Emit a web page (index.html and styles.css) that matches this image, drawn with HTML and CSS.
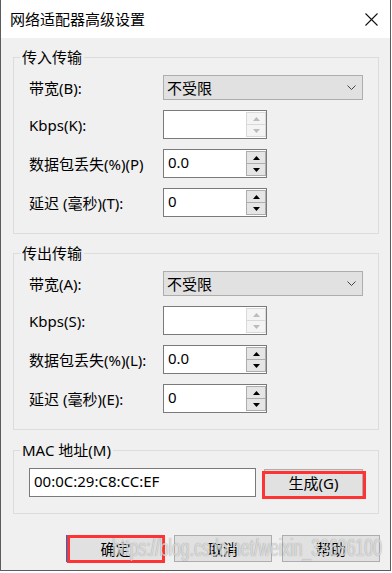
FILE: index.html
```html
<!doctype html>
<html lang="zh-CN">
  <head>
    <meta charset="UTF-8" />
    <meta name="viewport" content="width=device-width, initial-scale=1.0" />
    <title>网络适配器高级设置</title>
    <link rel="stylesheet" href="styles.css">
  </head>
  <body>
    <div class="window">
      <div class="titlebar">
        <span class="title">网络适配器高级设置</span>
        <svg class="close" width="13" height="13" viewBox="0 0 13 13" fill="none" stroke="#111" stroke-width="1.1">
          <path d="M0.5 0.5l12 12M12.5 0.5l-12 12" />
        </svg>
      </div>

      <div class="content">
        <fieldset class="group">
          <legend>传入传输</legend>
          <div class="row row-select">
            <span class="label">带宽(B):</span>
            <div class="select">
              <span>不受限</span>
              <svg class="chevron" width="9" height="5" viewBox="0 0 9 5" fill="none" stroke="#444" stroke-width="1">
                <path d="M0.5 0.5l4 4 4-4" />
              </svg>
            </div>
          </div>
          <div class="row">
            <span class="label">Kbps(K):</span>
            <div class="spin is-disabled">
              <span class="spin-value"></span>
              <span class="spin-buttons">
                <span class="spin-btn"><svg width="7" height="4" viewBox="0 0 7 4"><path d="M0 4h7L3.5 0z" /></svg></span>
                <span class="spin-btn"><svg width="7" height="4" viewBox="0 0 7 4"><path d="M0 0h7L3.5 4z" /></svg></span>
              </span>
            </div>
          </div>
          <div class="row">
            <span class="label">数据包丢失(%)(P)</span>
            <div class="spin">
              <span class="spin-value">0.0</span>
              <span class="spin-buttons">
                <span class="spin-btn"><svg width="7" height="4" viewBox="0 0 7 4"><path d="M0 4h7L3.5 0z" /></svg></span>
                <span class="spin-btn"><svg width="7" height="4" viewBox="0 0 7 4"><path d="M0 0h7L3.5 4z" /></svg></span>
              </span>
            </div>
          </div>
          <div class="row">
            <span class="label">延迟 (毫秒)(T):</span>
            <div class="spin">
              <span class="spin-value">0</span>
              <span class="spin-buttons">
                <span class="spin-btn"><svg width="7" height="4" viewBox="0 0 7 4"><path d="M0 4h7L3.5 0z" /></svg></span>
                <span class="spin-btn"><svg width="7" height="4" viewBox="0 0 7 4"><path d="M0 0h7L3.5 4z" /></svg></span>
              </span>
            </div>
          </div>
        </fieldset>

        <fieldset class="group">
          <legend>传出传输</legend>
          <div class="row row-select">
            <span class="label">带宽(A):</span>
            <div class="select">
              <span>不受限</span>
              <svg class="chevron" width="9" height="5" viewBox="0 0 9 5" fill="none" stroke="#444" stroke-width="1">
                <path d="M0.5 0.5l4 4 4-4" />
              </svg>
            </div>
          </div>
          <div class="row">
            <span class="label">Kbps(S):</span>
            <div class="spin is-disabled">
              <span class="spin-value"></span>
              <span class="spin-buttons">
                <span class="spin-btn"><svg width="7" height="4" viewBox="0 0 7 4"><path d="M0 4h7L3.5 0z" /></svg></span>
                <span class="spin-btn"><svg width="7" height="4" viewBox="0 0 7 4"><path d="M0 0h7L3.5 4z" /></svg></span>
              </span>
            </div>
          </div>
          <div class="row">
            <span class="label">数据包丢失(%)(L):</span>
            <div class="spin">
              <span class="spin-value">0.0</span>
              <span class="spin-buttons">
                <span class="spin-btn"><svg width="7" height="4" viewBox="0 0 7 4"><path d="M0 4h7L3.5 0z" /></svg></span>
                <span class="spin-btn"><svg width="7" height="4" viewBox="0 0 7 4"><path d="M0 0h7L3.5 4z" /></svg></span>
              </span>
            </div>
          </div>
          <div class="row">
            <span class="label">延迟 (毫秒)(E):</span>
            <div class="spin">
              <span class="spin-value">0</span>
              <span class="spin-buttons">
                <span class="spin-btn"><svg width="7" height="4" viewBox="0 0 7 4"><path d="M0 4h7L3.5 0z" /></svg></span>
                <span class="spin-btn"><svg width="7" height="4" viewBox="0 0 7 4"><path d="M0 0h7L3.5 4z" /></svg></span>
              </span>
            </div>
          </div>
        </fieldset>

        <fieldset class="group group-mac">
          <legend>MAC 地址(M)</legend>
          <div class="mac-row">
            <div class="mac-input">00:0C:29:C8:CC:EF</div>
            <button class="btn btn-generate marked">生成(G)</button>
          </div>
        </fieldset>

        <div class="actions">
          <button class="btn btn-default marked">确定</button>
          <button class="btn">取消</button>
          <button class="btn">帮助</button>
        </div>
      </div>

      <div class="watermark">https://blog.csdn.net/weixin_38686100</div>
    </div>
  </body>
</html>
```

FILE: styles.css
```css
body {
  margin: 0;
  background: #fff;
  font-family: "Noto Sans", "Noto Sans CJK SC", sans-serif;
  font-size: 15px;
  color: #000;
}

.window {
  position: relative;
  width: 391px;
  height: 571px;
  box-sizing: border-box;
  border: 1px solid #5c5c5c;
  border-top: 0;
  background: #f0f0f0;
  overflow: hidden;
}

.titlebar {
  height: 38px;
  background: #fff;
  display: flex;
  align-items: center;
  justify-content: space-between;
  padding: 0 12px 0 9px;
}

.title {
  line-height: 20px;
}

.content {
  padding: 0 11px 0 12px;
}

.group {
  margin: 9px 0 0;
  padding: 8px 0 16px 15px;
  border: 1px solid #dcdcdc;
  min-width: 0;
}

.group legend {
  margin-left: -9px;
  padding: 0 2px;
  line-height: 20px;
}

.row {
  display: flex;
  align-items: center;
  height: 29px;
  margin-top: 10px;
}

.row-select {
  height: 25px;
  margin-top: 0;
}

.label {
  width: 134px;
  flex: none;
  white-space: nowrap;
}

.select {
  width: 200px;
  height: 25px;
  box-sizing: border-box;
  border: 1px solid #adadad;
  background: #e1e1e1;
  display: flex;
  align-items: center;
  justify-content: space-between;
  padding: 0 6px 0 3px;
}

.spin {
  width: 104px;
  height: 29px;
  box-sizing: border-box;
  border: 1px solid #7a7a7a;
  background: #fff;
  display: flex;
}

.spin-value {
  flex: 1;
  padding: 2px 0 0 4px;
  line-height: 20px;
}

.spin-buttons {
  width: 20px;
  display: flex;
  flex-direction: column;
  padding: 1px 0;
}

.spin-btn {
  flex: 1;
  display: flex;
  align-items: center;
  justify-content: center;
  border: 1px solid #adadad;
  background: #e5e5e5;
  fill: #000;
}

.spin-btn + .spin-btn {
  border-top: 0;
}

.is-disabled .spin-btn {
  border-color: #d9d9d9;
  background: #f4f4f4;
  fill: #bcbcbc;
}

.group-mac {
  margin-top: 10px;
}

.mac-row {
  display: flex;
  align-items: center;
  gap: 8px;
  padding-right: 0;
}

.mac-input {
  width: 227px;
  height: 29px;
  box-sizing: border-box;
  border: 1px solid #7a7a7a;
  background: #fff;
  padding: 2px 0 0 4px;
  line-height: 20px;
}

.btn {
  position: relative;
  width: 98px;
  height: 27px;
  padding: 0;
  border: 1px solid #adadad;
  background: #e1e1e1;
  font: inherit;
  color: #000;
  line-height: 20px;
}

.btn-generate {
  width: 99px;
  height: 28px;
}

.btn-default {
  border-color: #0078d7;
  border-left-width: 2px;
}

/* red annotation boxes drawn over the screenshot */
.marked::after {
  content: "";
  position: absolute;
  border: 3px solid #f33;
}

.btn-generate::after {
  left: -3px;
  right: -4px;
  top: 1px;
  bottom: -3px;
}

.btn-default::after {
  left: -1px;
  right: -2px;
  top: -1px;
  bottom: -2px;
}

.actions {
  display: flex;
  justify-content: flex-end;
  gap: 10px;
  margin: 21px -1px 0 0;
}

.watermark {
  position: absolute;
  left: 111px;
  top: 535px;
  font-family: "Liberation Sans", sans-serif;
  font-size: 23px;
  line-height: 26px;
  color: rgba(255, 255, 255, 0.7);
  text-shadow: 0 0 1px rgba(0, 0, 0, 0.45);
  transform: scaleX(0.69);
  transform-origin: left top;
  white-space: nowrap;
  pointer-events: none;
}
```
